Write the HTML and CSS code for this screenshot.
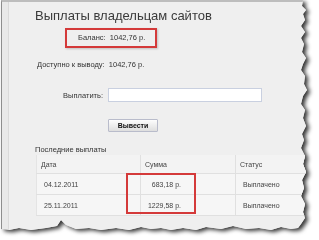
FILE: index.html
```html
<!DOCTYPE html>
<html lang="ru">
<head>
  <meta charset="UTF-8" />
  <title>Выплаты владельцам сайтов</title>
  <link rel="stylesheet" href="styles.css">
</head>
<body>
  <div class="sheet">
    <div class="paper">
      <div class="panel">
        <h1>Выплаты владельцам сайтов</h1>

        <div class="balance">Баланс:&nbsp; 1042,76 р.</div>

        <p class="available">Доступно к выводу:&nbsp; 1042,76 р.</p>

        <div class="pay-row">
          <label for="sum">Выплатить:</label>
          <input id="sum" type="text" />
        </div>

        <button class="withdraw">Вывести</button>

        <p class="section-title">Последние выплаты</p>
        <table class="payouts">
          <thead>
            <tr><th class="c-date">Дата</th><th class="c-sum">Сумма</th><th>Статус</th></tr>
          </thead>
          <tbody>
            <tr><td class="c-date">04.12.2011</td><td class="c-sum">683,18 р.</td><td>Выплачено</td></tr>
            <tr><td class="c-date">25.11.2011</td><td class="c-sum">1229,58 р.</td><td>Выплачено</td></tr>
          </tbody>
        </table>
      </div>
    </div>
    <!-- рамка поверх таблицы -->
    <div class="mark"></div>
  </div>
</body>
</html>
```

FILE: styles.css
```css
body {
  margin: 0;
  background: #fff;
  font-family: 'Liberation Sans', Arial, sans-serif;
  color: #444;
  overflow: hidden;
}
.sheet {
  position: relative;
  width: 319px;
  height: 240px;
  filter: drop-shadow(3px 2px 2px rgba(0, 0, 0, 0.8));
}
.paper {
  margin-left: 1px;
  width: 310px;
  height: 236px;
  box-sizing: border-box;
  background: #e9e9e9;
  border-left: 1px solid #8e8e8e;
  border-top: 2px solid #bdbdbd;
  padding-left: 6px;
  clip-path: polygon(0 0, 302px 0, 301px 6px, 305px 10px, 302px 14px, 304px 20px, 300px 26px, 304px 32px, 300px 38px, 303px 44px, 301px 52px, 305px 58px, 302px 64px, 300px 70px, 304px 76px, 303px 84px, 306px 90px, 302px 96px, 300px 104px, 304px 110px, 302px 118px, 305px 126px, 301px 134px, 303px 140px, 300px 148px, 304px 156px, 302px 164px, 305px 172px, 301px 180px, 303px 188px, 300px 196px, 304px 204px, 302px 212px, 304px 218px, 300px 224px, 297px 228px, 290px 229px, 280px 227px, 270px 230px, 258px 228px, 245px 229px, 232px 226px, 220px 229px, 205px 227px, 195px 230px, 182px 228px, 170px 230px, 160px 228px, 150px 229px, 140px 227px, 128px 230px, 115px 228px, 100px 230px, 88px 228px, 75px 229px, 65px 225px, 60px 220px, 56px 226px, 45px 228px, 30px 230px, 18px 228px, 8px 230px, 0 229px);
}
.panel {
  height: 100%;
  background: #efefef;
  border-left: 1px solid #dadada;
  overflow: hidden;
}
h1 {
  margin: 6px 0 0 26px;
  font-size: 13px;
  line-height: 16px;
  font-weight: normal;
  color: #3a3a3a;
  white-space: nowrap;
}
.balance {
  margin: 4px 0 0 56px;
  width: 92px;
  box-sizing: border-box;
  border: 2px solid #d43a3a;
  padding-left: 11px;
  font-size: 7.5px;
  line-height: 16px;
  color: #333;
  box-shadow: 1px 1px 2px rgba(0, 0, 0, 0.2);
}
.available {
  margin: 12px 0 0 28px;
  font-size: 7.5px;
  line-height: 10px;
  color: #333;
}
.pay-row {
  display: flex;
  align-items: center;
  margin-top: 18px;
  gap: 5px;
}
.pay-row label {
  width: 94px;
  text-align: right;
  font-size: 7.5px;
  color: #333;
}
.pay-row input {
  width: 154px;
  height: 14px;
  box-sizing: border-box;
  margin: 0;
  padding: 0;
  border: 1px solid #c9d0e0;
  background: #fff;
}
.withdraw {
  display: block;
  margin: 17px 0 0 99px;
  width: 50px;
  height: 13px;
  padding: 0;
  border: 1px solid #b9bccb;
  border-radius: 1px;
  background: linear-gradient(#fdfdfd, #dedede);
  font-family: inherit;
  font-size: 7px;
  font-weight: bold;
  color: #111;
}
.section-title {
  margin: 13px 0 0 26px;
  font-size: 7.5px;
  line-height: 10px;
  color: #333;
}
.payouts {
  margin-left: 27px;
  width: 280px;
  border-collapse: collapse;
  background: #f6f6f6;
  font-size: 7px;
  color: #444;
}
.payouts th {
  height: 18px;
  padding: 0 0 0 4px;
  text-align: left;
  font-weight: normal;
  background: #f3f3f3;
  border-bottom: 1px solid #e0e0e0;
  border-left: 1px solid #e0e0e0;
}
.payouts td {
  height: 20px;
  padding: 0 0 0 7px;
  border-bottom: 1px solid #e0e0e0;
  border-left: 1px solid #e0e0e0;
}
.payouts .c-date {
  width: 96px;
  border-left: 1px solid #e4e4e4;
}
.payouts th.c-sum {
  width: 90px;
}
.payouts td.c-sum {
  text-align: right;
  padding: 0 54px 0 0;
}
.mark {
  position: absolute;
  left: 126px;
  top: 173px;
  width: 70px;
  height: 41px;
  box-sizing: border-box;
  border: 2px solid #d43a3a;
}
```
